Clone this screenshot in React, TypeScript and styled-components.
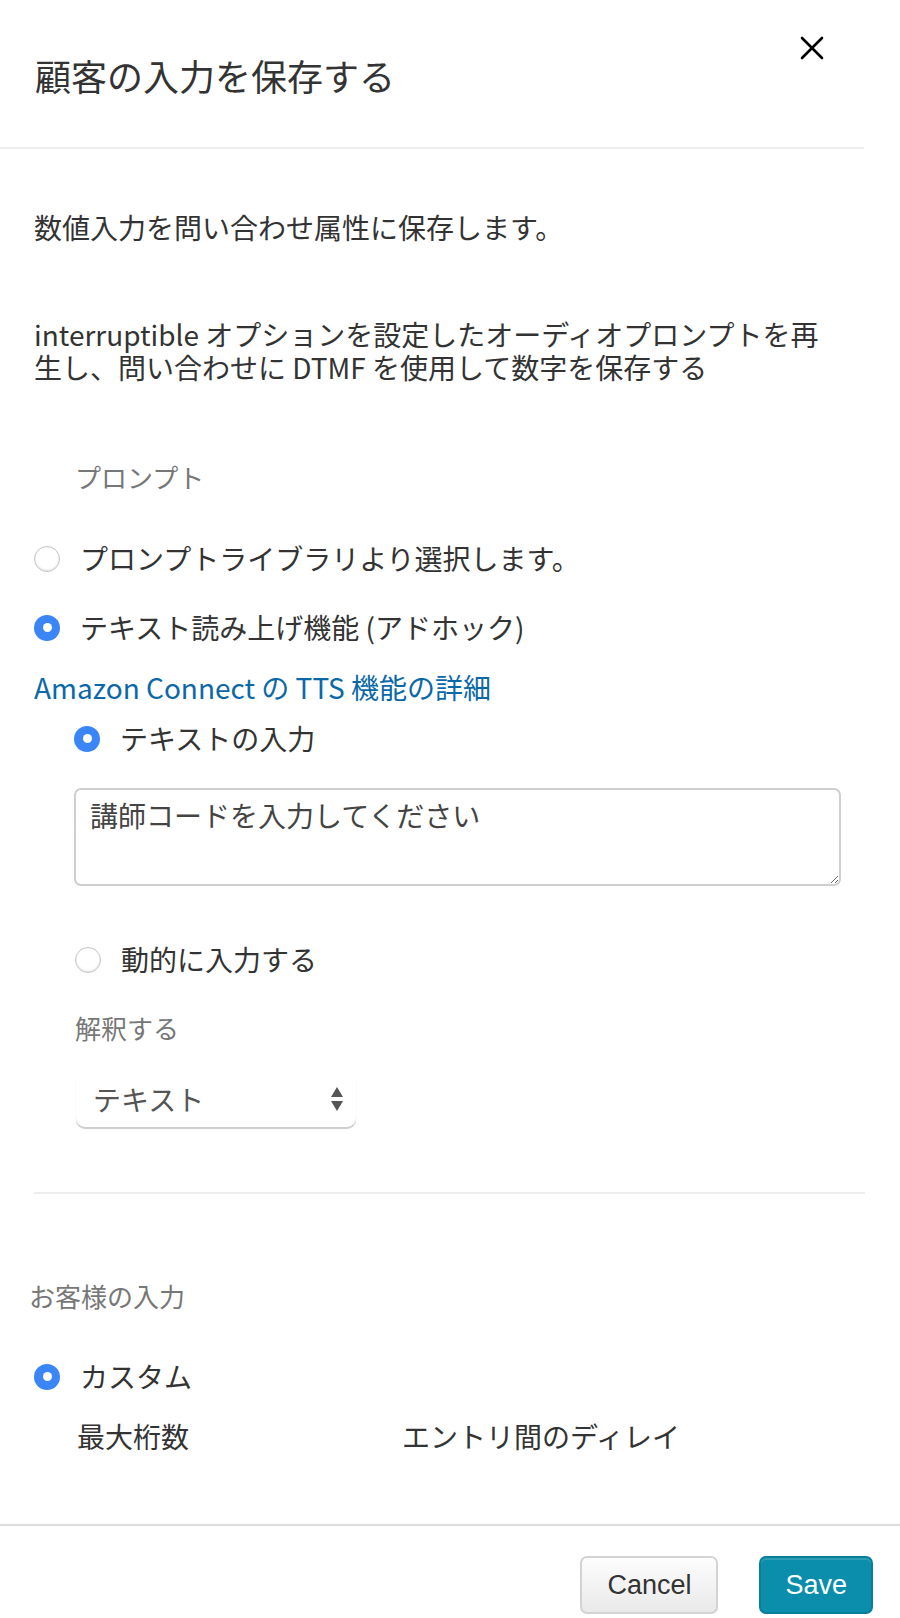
import { createGlobalStyle, styled } from 'styled-components'

const GlobalStyle = createGlobalStyle`
	body {
		margin: 0;
		background: #fff;
		font-family: 'Noto Sans CJK JP', 'Noto Sans', sans-serif;
		color: #333;
	}
`

export default function App() {
	return (
		<Page>
			<GlobalStyle />
			<Header>
				<Title>顧客の入力を保存する</Title>
				<CloseButton aria-label="close">
					<svg width="24" height="24" viewBox="0 0 24 24">
						<path
							d="M2 2 L22 22 M22 2 L2 22"
							stroke="#000"
							strokeWidth="2.6"
							strokeLinecap="round"
						/>
					</svg>
				</CloseButton>
			</Header>

			<Body>
				<Paragraph $mt={62}>数値入力を問い合わせ属性に保存します。</Paragraph>
				<Paragraph $mt={74}>
					interruptible オプションを設定したオーディオプロンプトを再
					<br />
					生し、問い合わせに DTMF を使用して数字を保存する
				</Paragraph>

				<SectionLabel $mt={76} $indent={41}>
					プロンプト
				</SectionLabel>

				<RadioRow $mt={49} $indent={0}>
					<Radio $checked={false} />
					<RadioText>プロンプトライブラリより選択します。</RadioText>
				</RadioRow>
				<RadioRow $mt={36} $indent={0}>
					<Radio $checked />
					<RadioText>テキスト読み上げ機能 (アドホック)</RadioText>
				</RadioRow>

				<Link href="#">Amazon Connect の TTS 機能の詳細</Link>

				<RadioRow $mt={18} $indent={40}>
					<Radio $checked />
					<RadioText>テキストの入力</RadioText>
				</RadioRow>

				<TextArea defaultValue="講師コードを入力してください" />

				<RadioRow $mt={57} $indent={41}>
					<Radio $checked={false} />
					<RadioText>動的に入力する</RadioText>
				</RadioRow>

				<SectionLabel $mt={35} $indent={41}>
					解釈する
				</SectionLabel>

				<SelectBox>
					<SelectValue>テキスト</SelectValue>
					<svg width="14" height="26" viewBox="0 0 14 26">
						<path d="M7 1 L13 11 L1 11 Z" fill="#555" />
						<path d="M7 25 L13 15 L1 15 Z" fill="#555" />
					</svg>
				</SelectBox>

				<Divider />

				<SectionLabel $mt={85} $indent={-5}>
					お客様の入力
				</SectionLabel>

				<RadioRow $mt={48} $indent={0}>
					<Radio $checked />
					<RadioText>カスタム</RadioText>
				</RadioRow>

				<FieldRow>
					<FieldName $width={325}>最大桁数</FieldName>
					<FieldName>エントリ間のディレイ</FieldName>
				</FieldRow>
			</Body>

			<Footer>
				<Button $primary={false}>Cancel</Button>
				<Button $primary>Save</Button>
			</Footer>
		</Page>
	)
}

const Page = styled.div`
	width: 900px;
	min-height: 1618px;
	display: flex;
	flex-direction: column;
`

const Header = styled.div`
	width: 864px;
	height: 149px;
	display: flex;
	justify-content: space-between;
	align-items: flex-start;
	padding: 0 40px 0 35px;
	box-sizing: border-box;
	border-bottom: 2px solid #eeeeee;
`

const Title = styled.h1`
	margin: 55px 0 0;
	font-size: 36px;
	line-height: 40px;
	font-weight: 400;
	color: #333;
`

const CloseButton = styled.button`
	margin-top: 36px;
	width: 24px;
	height: 24px;
	padding: 0;
	border: none;
	background: none;
	cursor: pointer;
	display: flex;
`

const Body = styled.div`
	width: 864px;
	padding-left: 34px;
	box-sizing: border-box;
	display: flex;
	flex-direction: column;
	align-items: flex-start;
`

const Paragraph = styled.p<{ $mt: number }>`
	margin: ${(p) => p.$mt}px 0 0;
	font-size: 28px;
	line-height: 33px;
	color: #333;
`

const SectionLabel = styled.div<{ $mt: number; $indent: number }>`
	margin: ${(p) => p.$mt}px 0 0 ${(p) => p.$indent}px;
	font-size: 26px;
	line-height: 33px;
	color: #777;
`

const RadioRow = styled.label<{ $mt: number; $indent: number }>`
	margin: ${(p) => p.$mt}px 0 0 ${(p) => p.$indent}px;
	display: flex;
	align-items: center;
	gap: 20px;
	height: 33px;
`

const Radio = styled.span<{ $checked: boolean }>`
	width: 26px;
	height: 26px;
	border-radius: 50%;
	box-sizing: border-box;
	flex-shrink: 0;
	background: ${(p) => (p.$checked ? '#3b86f7' : '#fff')};
	border: ${(p) => (p.$checked ? 'none' : '1px solid #c4c4c4')};
	box-shadow: ${(p) =>
		p.$checked ? 'none' : 'inset 0 -1px 2px rgba(0, 0, 0, 0.12)'};
	display: flex;
	align-items: center;
	justify-content: center;

	&::after {
		content: '';
		display: ${(p) => (p.$checked ? 'block' : 'none')};
		width: 9px;
		height: 9px;
		border-radius: 50%;
		background: #fff;
	}
`

const RadioText = styled.span`
	font-size: 28px;
	line-height: 33px;
	color: #333;
`

const Link = styled.a`
	margin-top: 27px;
	font-size: 28px;
	line-height: 33px;
	color: #0b68a8;
	text-decoration: none;
`

const TextArea = styled.textarea`
	margin: 33px 0 0 40px;
	width: 767px;
	height: 98px;
	box-sizing: border-box;
	padding: 9px 14px;
	border: 2px solid #cfcfcf;
	border-radius: 7px;
	font-family: 'Noto Sans CJK JP', sans-serif;
	font-size: 28px;
	line-height: 33px;
	color: #444;
	resize: vertical;
	outline: none;
`

const SelectBox = styled.div`
	margin: 27px 0 0 42px;
	width: 280px;
	height: 56px;
	box-sizing: border-box;
	padding: 0 12px 0 17px;
	border-radius: 9px;
	box-shadow: 0 2px 1px rgba(0, 0, 0, 0.2);
	display: flex;
	align-items: center;
	justify-content: space-between;
	cursor: pointer;
`

const SelectValue = styled.span`
	font-size: 28px;
	line-height: 33px;
	color: #555;
`

const Divider = styled.hr`
	margin: 65px 0 0;
	width: 831px;
	border: none;
	border-top: 2px solid #eeeeee;
`

const FieldRow = styled.div`
	margin: 27px 0 0 43px;
	display: flex;
`

const FieldName = styled.div<{ $width?: number }>`
	width: ${(p) => (p.$width ? `${p.$width}px` : 'auto')};
	font-size: 28px;
	line-height: 33px;
	color: #333;
`

const Footer = styled.div`
	margin-top: 71px;
	border-top: 2px solid #dddddd;
	padding: 30px 27px 0 0;
	display: flex;
	justify-content: flex-end;
	gap: 41px;
`

const Button = styled.button<{ $primary: boolean }>`
	height: 58px;
	min-width: ${(p) => (p.$primary ? '113px' : '138px')};
	padding: 0 24px;
	border-radius: 7px;
	font-family: 'Liberation Sans', Arial, sans-serif;
	font-size: 27px;
	cursor: pointer;
	color: ${(p) => (p.$primary ? '#fff' : '#333')};
	background: ${(p) =>
		p.$primary
			? '#0a8eab'
			: 'linear-gradient(to bottom, #fdfdfd, #e9e9e9)'};
	border: 2px solid ${(p) => (p.$primary ? '#0a7f99' : '#d3d3d3')};
	box-shadow: ${(p) =>
		p.$primary
			? 'inset 0 2px 0 rgba(255,255,255,0.15)'
			: 'inset 0 1px 0 #fff'};
`
